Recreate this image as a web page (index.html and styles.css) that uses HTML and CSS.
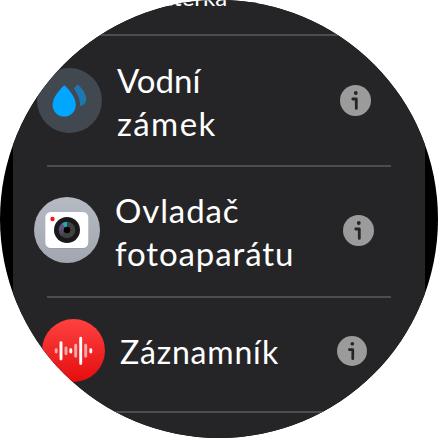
FILE: index.html
```
<!DOCTYPE html>
<html lang="cs">
<head>
<meta charset="utf-8">
<title>Nastavení</title>
<link rel="stylesheet" href="styles.css">
</head>
<body>
<svg class="defs" width="0" height="0">
  <symbol id="info" viewBox="0 0 31 31">
    <circle cx="15.5" cy="15.5" r="15.5" fill="#9b9b9b"/>
    <circle cx="15.8" cy="8" r="1.9" fill="#252527"/>
    <path d="M12.8 14H16.3V23.4" fill="none" stroke="#252527" stroke-width="2.8" stroke-linecap="round" stroke-linejoin="round"/>
  </symbol>
</svg>
<main class="watch">
  <div class="list">
    <section class="row row-top"><span class="label">Baterka</span></section>
    <section class="row row-water">
      <svg class="icon" viewBox="0 0 65 65">
        <circle cx="32.5" cy="32.5" r="32.5" fill="#414850"/>
        <path d="M40.6 16.2C46.5 21.5 49.6 27 49.2 31.5C48.8 35.5 46.5 37.7 43 38C43.2 31 40.5 25.5 36.7 20.8Z" fill="#1c78ae"/>
        <path d="M27.3 17.2C34 23.5 38.8 30 38.8 37A11.6 11.6 0 0 1 15.6 37C15.6 30 20.8 23.5 27.3 17.2Z" fill="#00a6ff"/>
      </svg>
      <span class="label">Vodní<br><span class="wide">zámek</span></span>
      <svg class="info"><use href="#info"/></svg>
    </section>
    <section class="row row-camera">
      <svg class="icon" viewBox="0 0 66 66">
        <defs><linearGradient id="silver" x2="0" y2="1"><stop stop-color="#b6bac2"/><stop offset="1" stop-color="#a1a6b1"/></linearGradient></defs>
        <circle cx="33" cy="33" r="33" fill="url(#silver)"/>
        <rect x="11.3" y="16" width="43" height="36" rx="5.5" fill="#8f949f" opacity=".45"/>
        <rect x="11.3" y="15" width="43" height="36" rx="5.5" fill="#fff"/>
        <circle cx="18.5" cy="22" r="2.2" fill="#f5161c"/>
        <circle cx="33" cy="33" r="13" fill="#19191a"/>
        <circle cx="33" cy="33" r="8.3" fill="#414143"/>
        <path d="M33 33L24.7 33A8.3 8.3 0 0 1 28 26.4Z" fill="#625184"/>
        <path d="M33 33L28 26.4A8.3 8.3 0 0 1 33 24.7Z" fill="#23a9b5"/>
        <path d="M33 33L27 38.7A8.3 8.3 0 0 1 24.7 33Z" fill="#504b5e"/>
        <circle cx="33" cy="33" r="3.3" fill="#000"/>
      </svg>
      <span class="label">Ovladač<br>fotoaparátu</span>
      <svg class="info"><use href="#info"/></svg>
    </section>
    <section class="row row-recorder">
      <svg class="icon" viewBox="0 0 63 63">
        <defs><linearGradient id="red" x2="0" y2="1"><stop stop-color="#ff4141"/><stop offset="1" stop-color="#e50d0d"/></linearGradient></defs>
        <circle cx="31.5" cy="31.5" r="31.5" fill="url(#red)"/>
        <g fill="none" stroke="#fff" stroke-width="2.9" stroke-linecap="round">
          <path d="M19 23.8V40M28.8 30.8V33M38.7 19.3V44.5M48.8 30.8V33"/>
          <path opacity=".6" d="M14.2 30.8V33M24 29V34.8M33.7 26.3V37.3M43.7 26.3V37.3"/>
        </g>
      </svg>
      <span class="label">Záznamník</span>
      <svg class="info"><use href="#info"/></svg>
    </section>
  </div>
</main>
</body>
</html>
```
FILE: styles.css
```
* { box-sizing: border-box; }
body { margin: 0; background: #fff; overflow: hidden; }
.defs { display: block; }
.watch {
  width: 438px;
  height: 438px;
  padding: 0 13px;
  border-radius: 50%;
  overflow: hidden;
  background: #000;
}
.list {
  display: flex;
  flex-direction: column;
  height: 438px;
  background: #252527;
  color: #fff;
  font: 33px/43px Lato, "Liberation Sans", sans-serif;
}
.row {
  display: flex;
  flex: none;
  align-items: center;
  height: 131px;
  margin: 0 34px;
  border-bottom: 2px solid #4d4d4f;
}
.row-top { height: 36px; align-items: flex-start; font-size: 24px; }
.row-top .label { margin: -25px 0 0 99px; }
.icon { display: block; flex: none; }
.label { white-space: nowrap; }
.info { flex: none; width: 31px; height: 31px; margin-left: auto; }
.row-water .icon { width: 65px; height: 65px; margin: 0 15px 0 -10px; }
.row-water .info { margin-right: 20px; }
.row-water .label { padding-top: 2px; }
.wide { letter-spacing: 1.4px; }
.row-camera { padding-bottom: 3px; }
.row-camera .icon { width: 66px; height: 66px; margin: 0 15px 0 -13px; }
.row-camera .info { margin-right: 17.5px; }
.row-camera .label { padding-top: 3px; letter-spacing: .9px; }
.row-recorder { height: 115px; padding-bottom: 8px; font-size: 32px; }
.row-recorder .icon { width: 63px; height: 63px; margin: 0 15px 0 -5px; }
.row-recorder .info { width: 30px; height: 30px; margin-right: 24px; }
.row-recorder .label { padding-top: 1px; letter-spacing: .8px; }
```
